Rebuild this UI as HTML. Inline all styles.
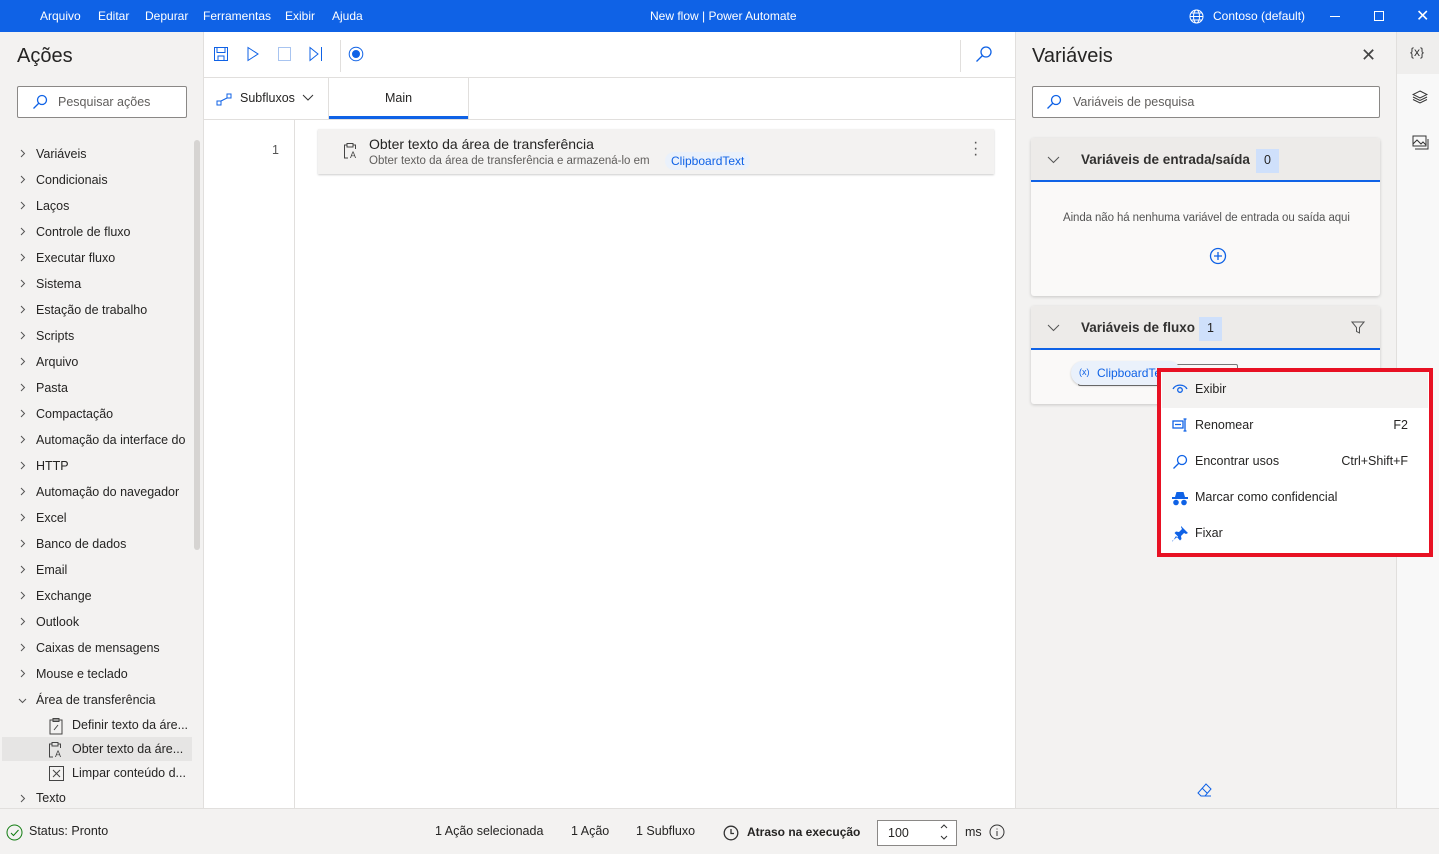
<!DOCTYPE html>
<html><head><meta charset="utf-8"><style>
*{box-sizing:border-box;margin:0;padding:0}
body{width:1439px;height:854px;overflow:hidden;font-family:"Segoe UI","Liberation Sans",sans-serif;font-size:12.5px;color:#252423;background:#fff;position:relative}
.abs{position:absolute;white-space:nowrap}
#title{left:0;top:0;width:1439px;height:32px;background:#0f62e6;color:#fff}
#title span{position:absolute;top:9px;font-size:12px}
#left{left:0;top:32px;width:204px;height:776px;background:#f3f2f1;border-right:1px solid #e1dfdd}
.item{position:absolute;left:36px;font-size:12.5px;white-space:nowrap;line-height:16px}
.chev{position:absolute;left:20px;line-height:0}
.chev svg{display:block}
#center{left:204px;top:32px;width:811px;height:776px;background:#fff}
#right{left:1015px;top:32px;width:381px;height:776px;background:#f3f2f1;border-left:1px solid #e1dfdd}
#strip{left:1396px;top:32px;width:43px;height:776px;background:#f8f8f8;border-left:1px solid #e1dfdd}
#status{left:0;top:808px;width:1439px;height:46px;background:#f3f2f1;border-top:1px solid #e1dfdd}
.search{position:absolute;height:32px;border:1px solid #8a8886;background:#fff;border-radius:2px;color:#605e5c;font-size:12.5px;padding:8px 0 0 40px}
.card{position:absolute;background:#faf9f8;box-shadow:0 1px 3px rgba(0,0,0,.18);border-radius:3px}
.menu{position:absolute;left:1162px;top:372px;width:266px;height:180px;background:#fff}
.mi{position:absolute;left:0;width:266px;height:36px;font-size:12.5px}
.mi span{position:absolute;left:33px;top:10px}
.mi b{position:absolute;right:20px;top:10px;font-weight:normal}
.mi svg{position:absolute;left:10px;top:10px}
</style></head><body>
<div id="title" class="abs">
<span style="left:40px">Arquivo</span><span style="left:98px">Editar</span><span style="left:145px">Depurar</span><span style="left:203px">Ferramentas</span><span style="left:285px">Exibir</span><span style="left:332px">Ajuda</span>
<span style="left:650px">New flow | Power Automate</span>
<svg class="abs" style="left:1189px;top:9px" width="15" height="15" viewBox="0 0 15 15" fill="none" stroke="#fff"><circle cx="7.5" cy="7.5" r="6.5"/><ellipse cx="7.5" cy="7.5" rx="3" ry="6.5"/><path d="M1 7.5h13M2 4h11M2 11h11"/></svg>
<span style="left:1213px">Contoso (default)</span>
<div class="abs" style="left:1330px;top:16px;width:10px;height:1px;background:#fff"></div>
<div class="abs" style="left:1374px;top:11px;width:10px;height:10px;border:1px solid #fff"></div>
<span style="left:1416px;top:6px;font-size:16px">✕</span>
</div>

<div id="left" class="abs">
<div class="abs" style="left:17px;top:13px;font-size:20px">Ações</div>
<div class="search" style="left:17px;top:54px;width:170px">Pesquisar ações</div>
<svg class="abs" style="left:32px;top:62px" width="16" height="16" viewBox="0 0 16 16" fill="none" stroke="#0f62e6" stroke-width="1.3"><circle cx="10" cy="6" r="4.5"/><path d="M7 9l-5.5 5.5"/></svg>
<div class="abs" style="left:194px;top:108px;width:6px;height:410px;background:#d6d4d2;border-radius:3px"></div>
<div class="abs" style="left:2px;top:705px;width:190px;height:24px;background:#e6e5e4"></div>
<div id="items"></div>
</div>

<div id="center" class="abs">
<div class="abs" style="left:0;top:0;width:811px;height:46px;border-bottom:1px solid #e1dfdd"></div>
<svg class="abs" style="left:9px;top:14px" width="16" height="16" viewBox="0 0 16 16" fill="none" stroke="#0f62e6"><rect x="1.5" y="1.5" width="13" height="13"/><rect x="4" y="1.5" width="8" height="5"/><rect x="5" y="10" width="6" height="4.5"/></svg>
<svg class="abs" style="left:42px;top:14px" width="14" height="16" fill="none" stroke="#0f62e6"><path d="M2 1.5l10 6.5-10 6.5z"/></svg>
<div class="abs" style="left:74px;top:15px;width:13px;height:14px;border:1px solid #a8c4f0"></div>
<svg class="abs" style="left:104px;top:14px" width="16" height="16" fill="none" stroke="#0f62e6"><path d="M2 1.5l8 6.5-8 6.5zM13.5 1v14"/></svg>
<div class="abs" style="left:136px;top:8px;width:1px;height:32px;background:#e1dfdd"></div>
<svg class="abs" style="left:144px;top:14px" width="16" height="16" fill="none" stroke="#0f62e6"><circle cx="8" cy="8" r="6.8"/><circle cx="8" cy="8" r="3.5" fill="#0f62e6"/></svg>
<div class="abs" style="left:756px;top:8px;width:1px;height:32px;background:#e1dfdd"></div>
<svg class="abs" style="left:771px;top:13px" width="18" height="18" fill="none" stroke="#0f62e6" stroke-width="1.3"><circle cx="11" cy="7" r="5"/><path d="M7.5 10.5L1.5 16.5"/></svg>
<div class="abs" style="left:0;top:46px;width:811px;height:42px;border-bottom:1px solid #e1dfdd"></div>
<svg class="abs" style="left:12px;top:61px" width="16" height="14" fill="none" stroke="#0f62e6"><rect x="1" y="8" width="4" height="4"/><rect x="11" y="1" width="4" height="4"/><path d="M5 8l6-3"/></svg>
<div class="abs" style="left:36px;top:59px">Subfluxos</div>
<svg class="abs" style="left:98px;top:62px" width="12" height="8" fill="none" stroke="#333"><path d="M1 1l5 5 5-5"/></svg>
<div class="abs" style="left:124px;top:46px;width:1px;height:42px;background:#e1dfdd"></div>
<div class="abs" style="left:264px;top:46px;width:1px;height:42px;background:#e1dfdd"></div>
<div class="abs" style="left:181px;top:59px">Main</div>
<div class="abs" style="left:125px;top:84px;width:139px;height:3px;background:#0f62e6"></div>
<div class="abs" style="left:90px;top:88px;width:1px;height:688px;background:#e1dfdd"></div>
<div class="abs" style="left:68px;top:111px;color:#555">1</div>
<div class="abs" style="left:114px;top:97px;width:676px;height:45px;background:#f3f2f1;box-shadow:0 1px 2px rgba(0,0,0,.2)"></div>
<svg class="abs" style="left:139px;top:110px" width="16" height="18" fill="none" stroke="#444"><path d="M4 3H1.5v13H5M10 3h2.5v4M4 1.5h6V5H4z"/><text x="7" y="16" font-size="9" fill="#444" stroke="none" font-family="Liberation Sans">A</text></svg>
<div class="abs" style="left:165px;top:103px;font-size:14px;line-height:18px">Obter texto da área de transferência</div>
<div class="abs" style="left:165px;top:121px;font-size:11.5px;line-height:16px;color:#605e5c">Obter texto da área de transferência e armazená-lo em</div>
<div class="abs" style="left:461px;top:120px;height:18px;line-height:16px;padding:1px 6px;background:#eaf1fb;border-radius:9px;color:#0f62e6;font-size:12px">ClipboardText</div>
<div class="abs" style="left:769px;top:108px;font-size:16px;color:#555;line-height:6px">·<br>·<br>·</div>
</div>

<div id="right" class="abs">
<div class="abs" style="left:16px;top:13px;font-size:20px">Variáveis</div>
<div class="abs" style="left:345px;top:13px;font-size:18px;color:#444">✕</div>
<div class="search" style="left:16px;top:54px;width:348px">Variáveis de pesquisa</div>
<svg class="abs" style="left:30px;top:62px" width="16" height="16" fill="none" stroke="#0f62e6" stroke-width="1.3"><circle cx="10" cy="6" r="4.5"/><path d="M7 9l-5.5 5.5"/></svg>
<div class="card" style="left:15px;top:106px;width:349px;height:158px">
<div class="abs" style="left:0;top:0;width:349px;height:44px;background:#edebe9;border-bottom:2px solid #0f62e6;border-radius:3px 3px 0 0"></div>
<svg class="abs" style="left:16px;top:18px" width="13" height="8" fill="none" stroke="#555"><path d="M1 1l5.5 5.5L12 1"/></svg>
<div class="abs" style="left:50px;top:14px;font-size:13.5px;font-weight:600;color:#323130">Variáveis de entrada/saída</div>
<div class="abs" style="left:225px;top:11px;width:23px;height:24px;background:#cfe0fb;text-align:center;padding-top:4px">0</div>
<div class="abs" style="left:32px;top:74px;font-size:11.5px;color:#555;letter-spacing:-0.1px">Ainda não há nenhuma variável de entrada ou saída aqui</div>
<svg class="abs" style="left:178px;top:109px" width="18" height="18" fill="none" stroke="#0f62e6" stroke-width="1.3"><circle cx="9" cy="9" r="7.5"/><path d="M9 5v8M5 9h8"/></svg>
</div>
<div class="card" style="left:15px;top:274px;width:349px;height:98px">
<div class="abs" style="left:0;top:0;width:349px;height:44px;background:#edebe9;border-bottom:2px solid #0f62e6;border-radius:3px 3px 0 0"></div>
<svg class="abs" style="left:16px;top:18px" width="13" height="8" fill="none" stroke="#555"><path d="M1 1l5.5 5.5L12 1"/></svg>
<div class="abs" style="left:50px;top:14px;font-size:13.5px;font-weight:600;color:#323130">Variáveis de fluxo</div>
<div class="abs" style="left:168px;top:11px;width:23px;height:24px;background:#cfe0fb;text-align:center;padding-top:4px">1</div>
<svg class="abs" style="left:320px;top:15px" width="14" height="13" fill="none" stroke="#555"><path d="M1 1h12L8.5 6.5V12l-3-1.5V6.5z"/></svg>
<div class="abs" style="left:47px;top:58px;width:160px;height:22px;border:1px solid #777;border-radius:2px"></div>
<div class="abs" style="left:40px;top:55px;width:110px;height:24px;background:#eaf1fb;border-radius:12px;box-shadow:0 1px 2px rgba(0,0,0,.2);color:#0f62e6;padding:5px 0 0 26px;font-size:12px;overflow:hidden">ClipboardTe</div>
<div class="abs" style="left:48px;top:61px;color:#0f62e6;font-size:9px">(x)</div>
</div>
<svg class="abs" style="left:181px;top:750px" width="16" height="16" fill="none" stroke="#0f62e6"><path d="M9 2l5 5-6 7H4l-3-3z M5 6l5 5M4 14h10"/></svg>
</div>

<div id="strip" class="abs">
<div class="abs" style="left:0;top:0;width:42px;height:42px;background:#efeeed"></div>
<div class="abs" style="left:13px;top:13px;font-size:12px;color:#333">{x}</div>
<svg class="abs" style="left:15px;top:58px" width="16" height="14" fill="none" stroke="#333"><path d="M8 1l7 3.5-7 3.5-7-3.5zM1 7l7 3.5L15 7M1 9.5l7 3.5 7-3.5"/></svg>
<svg class="abs" style="left:15px;top:103px" width="17" height="15" fill="none" stroke="#333"><rect x="1" y="1" width="13" height="10"/><path d="M3 14h13V4M1 9l4-4 4 4 2-2 3 3"/></svg>
</div>

<div id="status" class="abs">
<svg class="abs" style="left:6px;top:15px" width="17" height="17" fill="none" stroke="#107c10"><circle cx="8.5" cy="8.5" r="7.5"/><path d="M5 9l2.5 2.5L12.5 6"/></svg>
<div class="abs" style="left:29px;top:15px">Status: Pronto</div>
<div class="abs" style="left:435px;top:15px">1 Ação selecionada</div>
<div class="abs" style="left:571px;top:15px">1 Ação</div>
<div class="abs" style="left:636px;top:15px">1 Subfluxo</div>
<svg class="abs" style="left:723px;top:16px" width="16" height="16" fill="none" stroke="#333" stroke-width="1.3"><circle cx="8" cy="8" r="6.8"/><path d="M8 4v4.5h3"/></svg>
<div class="abs" style="left:747px;top:16px;font-weight:bold;font-size:12px">Atraso na execução</div>
<div class="abs" style="left:877px;top:11px;width:80px;height:26px;border:1px solid #8a8886;background:#fff;padding:5px 0 0 10px">100</div>
<svg class="abs" style="left:939px;top:13px" width="10" height="20" fill="none" stroke="#333"><path d="M2 6l3-3 3 3M2 14l3 3 3-3"/></svg>
<div class="abs" style="left:965px;top:16px">ms</div>
<svg class="abs" style="left:989px;top:15px" width="16" height="16" fill="none" stroke="#333"><circle cx="8" cy="8" r="7"/><path d="M8 7v5M8 4.5v1"/></svg>
</div>

<div class="abs" style="left:1157px;top:368px;width:276px;height:189px;border:4px solid #e81123;background:#fff"></div>
<div class="menu">
<div class="mi" style="top:0;background:#f3f2f1"><svg width="16" height="14" fill="none" stroke="#0f62e6" stroke-width="1.3"><path d="M1 7a7.5 6 0 0 1 14 0"/><circle cx="8" cy="8" r="2.3"/></svg><span>Exibir</span></div>
<div class="mi" style="top:36px"><svg width="17" height="14" fill="none" stroke="#0f62e6" stroke-width="1.3"><rect x="1" y="3" width="10" height="7"/><path d="M3 6.5h6M13 1v12M11.5 1h3M11.5 13h3"/></svg><span>Renomear</span><b>F2</b></div>
<div class="mi" style="top:72px"><svg width="16" height="16" fill="none" stroke="#0f62e6" stroke-width="1.3"><circle cx="10" cy="6" r="4.5"/><path d="M7 9l-5.5 5.5"/></svg><span>Encontrar usos</span><b>Ctrl+Shift+F</b></div>
<div class="mi" style="top:108px"><svg width="16" height="16" fill="#0f62e6"><path d="M3 7l1.5-5h7L13 7z"/><rect x="0" y="7" width="16" height="2"/><circle cx="4" cy="12.5" r="2.8"/><circle cx="12" cy="12.5" r="2.8"/></svg><span>Marcar como confidencial</span></div>
<div class="mi" style="top:144px"><svg width="16" height="16" fill="#0f62e6"><path d="M9 0l7 7-2 1-2-1-3 3 0.5 3-1.5 1.5L4 10 0.5 15.5 0 15l6-4.5L2.5 7 4 5.5l3 .5 3-3-1-2z"/></svg><span>Fixar</span></div>
</div>

<script>
var L=["Variáveis","Condicionais","Laços","Controle de fluxo","Executar fluxo","Sistema","Estação de trabalho","Scripts","Arquivo","Pasta","Compactação","Automação da interface do","HTTP","Automação do navegador","Excel","Banco de dados","Email","Exchange","Outlook","Caixas de mensagens","Mouse e teclado"];
var chev='<svg width="6" height="9" fill="none" stroke="#555"><path d="M1 1l3.5 3.5L1 8"/></svg>';
var h="";L.forEach(function(t,i){var y=114+i*26;h+='<div class="chev" style="top:'+(y+3)+'px">'+chev+'</div><div class="item" style="top:'+y+'px">'+t+'</div>';});
h+='<div class="chev" style="top:666px;left:18px"><svg width="9" height="6" fill="none" stroke="#555"><path d="M1 1l3.5 3.5L8 1"/></svg></div><div class="item" style="top:660px">Área de transferência</div>';
h+='<div class="item" style="left:72px;top:685px">Definir texto da áre...</div><div class="item" style="left:72px;top:709px">Obter texto da áre...</div><div class="item" style="left:72px;top:733px">Limpar conteúdo d...</div>';
h+='<svg class="abs" style="left:49px;top:686px" width="14" height="17" fill="none" stroke="#444"><rect x="1" y="2" width="12" height="14"/><rect x="4" y="0.5" width="6" height="3"/><path d="M5 12l4-5"/></svg>';
h+='<svg class="abs" style="left:48px;top:709px" width="16" height="18" fill="none" stroke="#444"><path d="M4 3H1.5v13H5M10 3h2.5v4M4 1.5h6V5H4z"/><text x="7" y="16" font-size="9" fill="#444" stroke="none" font-family="Liberation Sans">A</text></svg>';
h+='<svg class="abs" style="left:49px;top:734px" width="15" height="15" fill="none" stroke="#444"><rect x="0.5" y="0.5" width="14" height="14"/><path d="M4 4l7 7M11 4l-7 7"/></svg>';
h+='<div class="chev" style="top:762px">'+chev+'</div><div class="item" style="top:758px">Texto</div>';
document.getElementById("items").innerHTML=h;
</script>
</body></html>
